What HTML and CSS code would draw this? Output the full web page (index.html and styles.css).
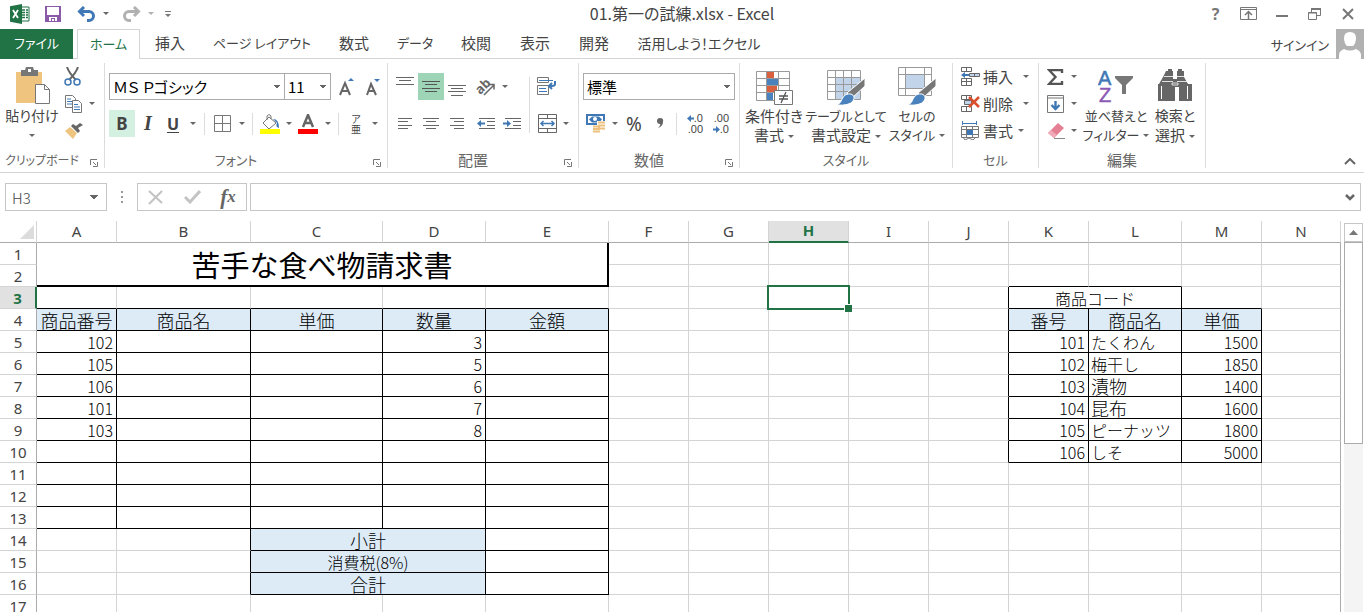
FILE: index.html
```html
<!DOCTYPE html>
<html lang="ja">
<head>
<meta charset="utf-8">
<title>01.第一の試練.xlsx - Excel</title>
<link rel="stylesheet" href="styles.css">
</head>
<body>
<header class="titlebar">
  <div class="quick">
    <svg class="logo" width="20" height="20" viewBox="0 0 20 20"><path d="M11 3h8v14h-8z" fill="#fff" stroke="#217346"/><path d="M12 6h3M16 6h2M12 8.500h3M16 8.500h2M12 11h3M16 11h2M12 13.500h3M16 13.500h2" stroke="#217346" stroke-width="1.300"/><path d="M0 2.200L12 0v20L0 17.800z" fill="#217346"/><path d="M3 6l5 8M8 6l-5 8" stroke="#fff" stroke-width="1.800"/></svg>
    <button class="icon w26" aria-label="上書き保存"><svg width="16" height="16"><path d="M0 0h16v16H0z" fill="#8a5aa8"/><path d="M2 1h12v8H2zM4 11h8v4H4z" fill="#fff"/><path d="M6 12h4v3H9v-2H7v2H6z" fill="#8a5aa8"/></svg></button>
    <button class="icon w26 undo" aria-label="元に戻す"><svg width="19" height="16" fill="none" stroke="#3f78b5" stroke-width="3"><path d="M7 1L2.500 5.500 7 10M3 5.500h9a4.500 4.500 0 0 1 0 9h-2"/></svg></button>
    <button class="icon arrow w14" aria-label="元に戻す履歴"></button>
    <button class="icon w26 redo" aria-label="やり直し"><svg width="19" height="16" fill="none" stroke="#b1b1b1" stroke-width="3"><path d="M12 1l4.500 4.500L12 10M16 5.500H7a4.500 4.500 0 0 0 0 9h2"/></svg></button>
    <button class="icon arrow w14 faint" aria-label="やり直し履歴"></button>
    <button class="icon w20" aria-label="クイック アクセスのカスタマイズ"><svg width="6" height="6"><path d="M0 .5h6" stroke="#777"/><path d="M0 3h6L3 6z" fill="#777"/></svg></button>
  </div>
  <h1 class="doc">01.第一の試練.xlsx - Excel</h1>
  <div class="window">
    <button class="icon w32 help" aria-label="ヘルプ">?</button>
    <button class="icon w32" aria-label="リボンの表示オプション"><svg width="17" height="13" fill="none" stroke="#777"><path d="M.5.5h16v12H.5zM.5 2.500h16"/><path d="M8.500 12V5M5 8l3.500-3.500L12 8" stroke-width="1.500"/></svg></button>
    <button class="icon w32" aria-label="最小化"><svg width="12" height="13"><path d="M0 8h12v2H0z" fill="#777"/></svg></button>
    <button class="icon w32" aria-label="元に戻す (縮小)"><svg width="13" height="12" fill="none" stroke="#777"><path d="M3.500 4V.5h9v7H9"/><path d="M3 1h10" stroke-width="2"/><path d="M.5 4.500h8v7h-8zM0 5h9"/></svg></button>
    <button class="icon w32" aria-label="閉じる"><svg width="12" height="12"><path d="M1 1l10 10M11 1L1 11" stroke="#777" stroke-width="2"/></svg></button>
  </div>
</header>

<nav class="tabs">
  <button class="tab file kana">ファイル</button>
  <button class="tab home kana">ホーム</button>
  <button class="tab">挿入</button>
  <button class="tab kana">ページ レイアウト</button>
  <button class="tab">数式</button>
  <button class="tab kana">データ</button>
  <button class="tab">校閲</button>
  <button class="tab">表示</button>
  <button class="tab">開発</button>
  <button class="tab blend">活用しよう！エクセル</button>
  <a class="signin kana" href="#">サインイン</a>
  <svg class="avatar" width="28" height="30"><path d="M0 0h28v30H0z" fill="#b1b1b1"/><path d="M8 9q0-6 6-6t6 6q0 5-3 8h-6q-3-3-3-8z" fill="#fff"/><path d="M3 30v-4q0-4 5-6 6 3 12 0 5 2 5 6v4z" fill="#fff"/></svg>
</nav>

<section class="ribbon">
  <div class="group clipboard">
    <div class="body">
      <button class="big w64"><svg class="art" width="36" height="39"><path d="M2 6h26v31H2z" fill="#eec47f"/><path d="M7 4h4l1-3h7l1 3h4v6H7z" fill="#777"/><path d="M14 3h3v3h-3z" fill="#fff"/><path d="M21.500 18.500h9l5 5v14h-14z" fill="#fff" stroke="#777"/><path d="M30.500 18.500v5h5" fill="none" stroke="#777"/></svg><span class="blend">貼り付け</span><i class="tri"></i></button>
      <div class="stack">
        <button class="icon row27 w16" aria-label="切り取り"><svg width="17" height="19" fill="none"><path d="M3 0q2 6 9 13M14 0q-2 6-9 13" stroke="#666" stroke-width="2"/><circle cx="4" cy="15" r="3" stroke="#3f78b5" stroke-width="1.500"/><circle cx="13" cy="15" r="3" stroke="#3f78b5" stroke-width="1.500"/></svg></button>
        <div class="line"><button class="icon row27 w20" aria-label="コピー"><svg width="18" height="18" fill="#fff" stroke="#777"><path d="M.5.500h7l3 3v9h-10z"/><path d="M2 4h4M2 6.500h5M2 9h5" stroke="#3f78b5"/><path d="M7.500 5.500h6l3 3v9h-9z"/><path d="M9 9.500h4M9 12h6M9 14.500h6" stroke="#3f78b5"/></svg></button><button class="icon arrow w16" aria-label="コピーのオプション"></button></div>
        <button class="icon row27 w20" aria-label="書式のコピー/貼り付け"><svg width="18" height="16"><path d="M0 8l5-4 7 6-4 6z" fill="#eec47f"/><path d="M6 3l7 7 2-2-2-3 5-3-3-2-4 3-3-2z" fill="#666"/></svg></button>
      </div>
    </div>
    <div class="label">クリップボード<button class="launch" aria-label="クリップボードの設定"><svg width="8" height="8"><path d="M.5 6V.5H7" fill="none" stroke="#777"/><path d="M3 3l3 3M7.500 3v4.500H3" fill="none" stroke="#777"/></svg></button></div>
  </div>

  <div class="group font">
    <div class="body rows">
      <div class="line"><select class="box fontname" aria-label="フォント"><option>ＭＳ Ｐゴシック</option></select><select class="box size" aria-label="フォント サイズ"><option>11</option></select>
        <button class="icon w26" aria-label="拡大"><svg width="16" height="18"><path d="M1 17L6 5l5 12M3 13h6" fill="none" stroke="#666" stroke-width="2"/><path d="M9 3h6l-3-3z" fill="#3f78b5"/></svg></button><button class="icon w26" aria-label="縮小"><svg width="16" height="18"><path d="M2 17L6 6l5 11M4 13h5" fill="none" stroke="#666" stroke-width="2"/><path d="M9 1h6l-3 3z" fill="#3f78b5"/></svg></button></div>
      <div class="line">
        <button class="icon w26 pressed bold">B</button><button class="icon w26 italic">I</button><button class="icon w24 under">U</button><button class="icon arrow w16" aria-label="下線の種類"></button><i class="sep"></i>
        <button class="icon w26" aria-label="罫線"><svg width="17" height="17"><path d="M.5.5h16v16H.5zM8.500 1v15M1 8.500h15" fill="none" stroke="#777"/></svg></button><button class="icon arrow w14" aria-label="罫線の種類"></button><i class="sep"></i>
        <button class="icon w26" aria-label="塗りつぶしの色"><svg width="20" height="20"><path d="M9 3l7 6-7 6-6-6z" fill="#fff" stroke="#777"/><path d="M7 6V2q2-3 4 0v3" fill="none" stroke="#777"/><path d="M13 5q6 0 6 9-4-1-2-5z" fill="#3f78b5"/><path d="M0 15h20v5H0z" fill="#ff0"/></svg></button><button class="icon arrow w12" aria-label="塗りつぶしの色の選択"></button>
        <button class="icon w26" aria-label="フォントの色"><svg width="20" height="20"><path d="M5 13L10 1l5 12M7 9h6" fill="none" stroke="#666" stroke-width="2.500"/><path d="M0 15h20v5H0z" fill="red"/></svg></button><button class="icon arrow w14" aria-label="フォントの色の選択"></button><i class="sep"></i>
        <button class="icon w26 ruby"><span>ア</span><span>亜</span></button><button class="icon arrow w12" aria-label="ふりがなの設定"></button>
      </div>
    </div>
    <div class="label kana">フォント<button class="launch" aria-label="フォントの設定"><svg width="8" height="8"><path d="M.5 6V.5H7" fill="none" stroke="#777"/><path d="M3 3l3 3M7.500 3v4.500H3" fill="none" stroke="#777"/></svg></button></div>
  </div>

  <div class="group align">
    <div class="body">
      <div class="rows split">
        <div class="line">
          <button class="icon w26" aria-label="上揃え"><svg width="18" height="20"><path d="M0 .5h18M3 3.500h12M0 7.500h18" stroke="#666"/></svg></button><button class="icon w26 chosen" aria-label="上下中央揃え"><svg width="18" height="20"><path d="M0 4.500h18M3 7.500h12M0 11.500h18M3 14.500h12" stroke="#555"/></svg></button><button class="icon w26" aria-label="下揃え"><svg width="18" height="20"><path d="M0 8.500h18M3 11.500h12M0 14.500h18M3 18.500h12" stroke="#666"/></svg></button>
          <button class="icon w26 apart" aria-label="方向"><svg class="slant" width="20" height="18"><text class="ab" x="0" y="13" transform="rotate(-45 7 10)">ab</text><path d="M8 17L18 7M13 6.500h5v5" fill="none" stroke="#666" stroke-width="1.500"/></svg></button><button class="icon arrow w12" aria-label="方向の選択"></button>
        </div>
        <div class="line">
          <button class="icon w26" aria-label="左揃え"><svg width="14" height="12"><path d="M0 .5h14M0 3.500h10M0 7.500h14M0 10.500h10" stroke="#666"/></svg></button><button class="icon w26" aria-label="中央揃え"><svg width="16" height="12"><path d="M0 .5h16M3 3.500h10M0 7.500h16M3 10.500h10" stroke="#666"/></svg></button><button class="icon w26" aria-label="右揃え"><svg width="14" height="12"><path d="M0 .5h14M4 3.500h10M0 7.500h14M4 10.500h10" stroke="#666"/></svg></button>
          <button class="icon w26 apart" aria-label="インデントを減らす"><svg width="18" height="12"><path d="M2 .5h16M10 3.500h8M10 7.500h8M2 10.500h16" stroke="#666"/><path d="M0 5.500L4 2v2.500h4v2H4V9z" fill="#3f78b5"/></svg></button><button class="icon w26" aria-label="インデントを増やす"><svg width="18" height="12"><path d="M2 .5h16M10 3.500h8M10 7.500h8M2 10.500h16" stroke="#666"/><path d="M8 5.500L4 2v2.500H0v2h4V9z" fill="#3f78b5"/></svg></button>
        </div>
      </div>
      <div class="rows wrapcol">
        <div class="line"><button class="icon w26" aria-label="折り返して全体を表示する"><svg width="20" height="19" fill="none"><path d="M.5.5h11v5H.5zM.5 8.500h11v9H.5z" stroke="#777"/><path d="M2 3.500h14M2 11.500h7M2 14.500h8" stroke="#3f78b5"/><path d="M18 4v3q0 2-3 2h-3M15 6l-3 3 3 3" stroke="#3f78b5" stroke-width="2"/></svg></button></div>
        <div class="line"><button class="icon w26" aria-label="セルを結合して中央揃え"><svg width="19" height="19" fill="none"><path d="M.5.5h18v18H.5zM.5 4.500h18M.5 14.500h18M9.500 0v4M9.500 15v4" stroke="#666"/><path d="M3 9.500h13M5.500 7L3 9.500 5.500 12M13.500 7L16 9.500 13.500 12" stroke="#3f78b5" stroke-width="1.500"/></svg></button><button class="icon arrow w12" aria-label="結合の選択"></button></div>
      </div>
    </div>
    <div class="label">配置<button class="launch" aria-label="配置の設定"><svg width="8" height="8"><path d="M.5 6V.5H7" fill="none" stroke="#777"/><path d="M3 3l3 3M7.500 3v4.500H3" fill="none" stroke="#777"/></svg></button></div>
  </div>

  <div class="group number">
    <div class="body rows">
      <div class="line"><select class="box format" aria-label="数値の書式"><option>標準</option></select></div>
      <div class="line">
        <button class="icon w26" aria-label="通貨表示形式"><svg width="20" height="19"><path d="M0 0h19v11H0z" fill="#3f78b5"/><path d="M2 2h15v7H2z" fill="#fff"/><path d="M3 5.500l3-3h7l3 3-3 3H6z" fill="#3f78b5"/><circle cx="9" cy="5" r="2" fill="#fff"/><path d="M11 7h8v10h-3v2H6v-8h5z" fill="#fff"/><path d="M12 8.500h7M12 11.500h7M12 14.500h7M7 12.500h7M7 15h7M7 17.500h7" stroke="#eec07d" stroke-width="2"/></svg></button><button class="icon arrow w12" aria-label="通貨の選択"></button>
        <button class="icon w26 sign">%</button><button class="icon w26" aria-label="桁区切りスタイル"><svg width="7" height="11"><path d="M3 0q4 0 3 4 0 4-5 6 3-3 2-4-3 0-3-3 0-3 3-3z" fill="#666"/></svg></button><i class="sep"></i>
        <button class="icon w26 dec" aria-label="小数点以下の表示桁数を増やす"><span><svg width="7" height="7"><path d="M0 3.500L4 0v2.500h3v2H4V7z" fill="#3f78b5"/></svg>.0</span><span>.00</span></button><button class="icon w26 dec" aria-label="小数点以下の表示桁数を減らす"><span>.00</span><span><svg width="7" height="7"><path d="M7 3.500L3 0v2.500H0v2h3V7z" fill="#3f78b5"/></svg>.0</span></button>
      </div>
    </div>
    <div class="label">数値<button class="launch" aria-label="数値の設定"><svg width="8" height="8"><path d="M.5 6V.5H7" fill="none" stroke="#777"/><path d="M3 3l3 3M7.500 3v4.500H3" fill="none" stroke="#777"/></svg></button></div>
  </div>

  <div class="group styles">
    <div class="body">
      <button class="big w64"><svg class="art" width="37" height="39"><path d="M.5 5.500h33v29H.5z" fill="#fff" stroke="#999"/><path d="M11 6h7v7h-7zM11 20h10v7H11z" fill="#d9603f"/><path d="M11 13h11v7H11zM11 27h6v7h-6z" fill="#4a82bd"/><path d="M10.500 6v28M22.500 6v28M0 12.500h34M0 19.500h34M0 26.500h34" stroke="#999" fill="none"/><path d="M18.500 24.500h18v14h-18z" fill="#fff" stroke="#777"/><path d="M23 30h9M23 33h9M30 26l-5 11" stroke="#555" stroke-width="1.300"/></svg><span>条件付き</span><span>書式<i class="tri"></i></span></button>
      <button class="big w80"><svg class="art" width="38" height="39"><path d="M.5 4.500h33v29H.5z" fill="#fff"/><path d="M9 11h25v22H9z" fill="#c1d4e9"/><path d="M.5 4.500h33v29H.5zM8.500 4v29M16.500 4v29M24.500 4v29M0 11.500h34M0 18.500h34M0 25.500h34" fill="none" stroke="#999"/><path d="M38 12v8L25 32l-5-5z" fill="#777" stroke="#fff"/><path d="M24 28q5 2 2 7-4 5-16 4 4-2 5-6 3-6 9-5z" fill="#4a82bd" stroke="#fff"/></svg><span class="kana">テーブルとして</span><span>書式設定<i class="tri"></i></span></button>
      <button class="big w62"><svg class="art" width="38" height="39"><path d="M.5 1.500h33v28H.5z" fill="#fff" stroke="#999"/><path d="M8 9h18v13H8z" fill="#c1d4e9"/><path d="M7.500 1v28M26.500 1v28M0 8.500h34M0 22.500h34" fill="none" stroke="#999"/><path d="M38 12v8L25 32l-5-5z" fill="#777" stroke="#fff"/><path d="M24 28q5 2 2 7-4 5-16 4 4-2 5-6 3-6 9-5z" fill="#4a82bd" stroke="#fff"/></svg><span class="kana">セルの</span><span class="kana">スタイル<i class="tri"></i></span></button>
    </div>
    <div class="label kana">スタイル</div>
  </div>

  <div class="group cells">
    <div class="body stack">
      <button class="small wide"><svg width="19" height="19" fill="none"><path d="M.5.500h10v4H.5zM5.500 0v4M.5 11.500h10v7H.5zM5.500 11v7M0 14.500h10" stroke="#666"/><path d="M8.500 6.500h10v3h-10zM13.500 6v3" fill="#c1d4e9" stroke="#666"/><path d="M0 8l4-3v2h4v2H4v2z" fill="#3f78b5"/></svg><span>挿入</span><i class="tri"></i></button>
      <button class="small wide"><svg width="19" height="19" fill="none"><path d="M.5 1.500h10v4H.5zM5.500 1v4M.5 12.500h10v5H.5zM5.500 12v5" stroke="#666"/><path d="M3.500 6.500h7v4h-7z" fill="#c1d4e9" stroke="#666"/><path d="M8 3l10 10M18 3L8 13" stroke="#d9502e" stroke-width="2.500"/></svg><span>削除</span><i class="tri"></i></button>
      <button class="small"><svg width="19" height="19" fill="none"><path d="M1.500 0v4M15.500 0v4M2 2.500h13" stroke="#3f78b5"/><path d="M.5 5.500h17v11H.5zM5.500 5v12M11.500 5v12M0 8.500h18M0 13.500h18M2 16l2 3 4-2 4 2 3-3" stroke="#777"/><path d="M6 9h6v5H6z" fill="#3f78b5"/></svg><span>書式</span><i class="tri"></i></button>
    </div>
    <div class="label kana">セル</div>
  </div>

  <div class="group editing">
    <div class="body">
      <div class="stack tools">
        <button class="small" aria-label="合計"><svg width="18" height="16"><path d="M15 4V1H2l6.500 7L2 15h13v-3" fill="none" stroke="#555" stroke-width="2.400"/></svg><i class="tri"></i></button>
        <button class="small" aria-label="フィル"><svg width="18" height="18" fill="none"><path d="M.5.5h16v17H.5zM0 3h17" stroke="#777"/><path d="M8.500 6v8M4.500 10l4 4 4-4" stroke="#3f78b5" stroke-width="2.400"/></svg><i class="tri"></i></button>
        <button class="small" aria-label="クリア"><svg width="18" height="18"><path d="M1 11L11 1l6 5L7 16z" fill="#e57f93"/><path d="M4 8l6 5-3 3-6-5z" fill="#f0a9b6"/><path d="M7 16.500h11" stroke="#888"/></svg><i class="tri"></i></button>
      </div>
      <button class="big w62"><svg class="art" width="36" height="39"><text class="az blue" x="0" y="19">A</text><text class="az violet" x="1" y="36">Z</text><path d="M17 10h18v2l-7 7v9h-4v-9l-7-7z" fill="#777"/></svg><span class="kana">並べ替えと</span><span class="kana">フィルター<i class="tri"></i></span></button>
      <button class="big w56"><svg class="art" width="36" height="39" fill="#666"><path d="M9 5h2V3h4v2h1v8h4V5h1V3h4v2h2v6l4 7 4 0v17h-13V21h-4v14H1V18h1l4-7z"/><path d="M7 10.500h9M20 10.500h9M5 15.500h11M20 15.500h11M15 17h6v2h-6z" stroke="#fff" stroke-width=".8"/><path d="M4.500 20v13M30.500 20v13" stroke="#fff"/></svg><span class="blend">検索と</span><span>選択<i class="tri"></i></span></button>
    </div>
    <div class="label">編集</div>
  </div>
  <button class="icon collapse" aria-label="リボンを折りたたむ"><svg width="12" height="7"><path d="M1 6l5-5 5 5" fill="none" stroke="#666" stroke-width="2"/></svg></button>
</section>

<section class="formula">
  <select class="namebox" aria-label="名前ボックス"><option>H3</option></select>
  <svg class="dots" width="2" height="12"><path d="M0 0h2v2H0zM0 5h2v2H0zM0 10h2v2H0z" fill="#999"/></svg>
  <div class="fx">
    <button class="icon w32" aria-label="キャンセル"><svg width="16" height="15"><path d="M1 1l13 12M14 1L1 14" stroke="#c4c4c4" stroke-width="2.200"/></svg></button>
    <button class="icon w32" aria-label="入力"><svg width="17" height="14"><path d="M1 7l5 5L16 1" fill="none" stroke="#c4c4c4" stroke-width="3"/></svg></button>
    <button class="icon w32 fn"><i>f</i>x</button>
  </div>
  <div class="entry"><input aria-label="数式バー"><button class="icon w20" aria-label="数式バーの展開"><svg width="10" height="7"><path d="M1 1l4 4 4-4" fill="none" stroke="#666" stroke-width="2.500"/></svg></button></div>
</section>

<main class="sheet">
<table class="grid">
<colgroup><col class="c37"><col class="c80"><col class="c134"><col class="c132"><col class="c103"><col class="c123"><col class="c80"><col class="c80"><col class="c80"><col class="c80"><col class="c80"><col class="c80"><col class="c93"><col class="c80"><col></colgroup>
<thead><tr><th class="corner"><svg width="14" height="14"><path d="M14 0v14H0z" fill="#dcdcdc"/></svg></th><th>A</th><th>B</th><th>C</th><th>D</th><th>E</th><th>F</th><th>G</th><th class="active">H</th><th>I</th><th>J</th><th>K</th><th>L</th><th>M</th><th>N</th></tr></thead>
<tbody>
<tr><th>1</th><td class="title" colspan="5" rowspan="2">苦手な食べ物請求書</td><td></td><td></td><td></td><td></td><td></td><td></td><td></td><td></td><td></td></tr>
<tr><th>2</th><td></td><td></td><td></td><td></td><td></td><td class="b"></td><td class="b"></td><td></td><td></td></tr>
<tr><th class="active">3</th><td class="b"></td><td class="b"></td><td class="b"></td><td class="b"></td><td class="b"></td><td></td><td></td><td class="current"><span class="cursor"></span></td><td></td><td class="r"></td><td class="r b mid" colspan="2">商品コード</td><td class="b"></td><td></td></tr>
<tr><th>4</th><td class="r b head">商品番号</td><td class="r b head">商品名</td><td class="r b head">単価</td><td class="r b head">数量</td><td class="r b head">金額</td><td></td><td></td><td></td><td></td><td class="r"></td><td class="r b head">番号</td><td class="r b head">商品名</td><td class="r b head">単価</td><td></td></tr>
<tr><th>5</th><td class="r b num">102</td><td class="r b"></td><td class="r b"></td><td class="r b num">3</td><td class="r b"></td><td></td><td></td><td></td><td></td><td class="r"></td><td class="r b num">101</td><td class="r b">たくわん</td><td class="r b num">1500</td><td></td></tr>
<tr><th>6</th><td class="r b num">105</td><td class="r b"></td><td class="r b"></td><td class="r b num">5</td><td class="r b"></td><td></td><td></td><td></td><td></td><td class="r"></td><td class="r b num">102</td><td class="r b">梅干し</td><td class="r b num">1850</td><td></td></tr>
<tr><th>7</th><td class="r b num">106</td><td class="r b"></td><td class="r b"></td><td class="r b num">6</td><td class="r b"></td><td></td><td></td><td></td><td></td><td class="r"></td><td class="r b num">103</td><td class="r b kanji">漬物</td><td class="r b num">1400</td><td></td></tr>
<tr><th>8</th><td class="r b num">101</td><td class="r b"></td><td class="r b"></td><td class="r b num">7</td><td class="r b"></td><td></td><td></td><td></td><td></td><td class="r"></td><td class="r b num">104</td><td class="r b kanji">昆布</td><td class="r b num">1600</td><td></td></tr>
<tr><th>9</th><td class="r b num">103</td><td class="r b"></td><td class="r b"></td><td class="r b num">8</td><td class="r b"></td><td></td><td></td><td></td><td></td><td class="r"></td><td class="r b num">105</td><td class="r b">ピーナッツ</td><td class="r b num">1800</td><td></td></tr>
<tr><th>10</th><td class="r b"></td><td class="r b"></td><td class="r b"></td><td class="r b"></td><td class="r b"></td><td></td><td></td><td></td><td></td><td class="r"></td><td class="r b num">106</td><td class="r b">しそ</td><td class="r b num">5000</td><td></td></tr>
<tr><th>11</th><td class="r b"></td><td class="r b"></td><td class="r b"></td><td class="r b"></td><td class="r b"></td><td></td><td></td><td></td><td></td><td></td><td></td><td></td><td></td><td></td></tr>
<tr><th>12</th><td class="r b"></td><td class="r b"></td><td class="r b"></td><td class="r b"></td><td class="r b"></td><td></td><td></td><td></td><td></td><td></td><td></td><td></td><td></td><td></td></tr>
<tr><th>13</th><td class="r b"></td><td class="r b"></td><td class="r b"></td><td class="r b"></td><td class="r b"></td><td></td><td></td><td></td><td></td><td></td><td></td><td></td><td></td><td></td></tr>
<tr><th>14</th><td></td><td class="r"></td><td class="r b head" colspan="2">小計</td><td class="r b"></td><td></td><td></td><td></td><td></td><td></td><td></td><td></td><td></td><td></td></tr>
<tr><th>15</th><td></td><td class="r"></td><td class="r b head mixed" colspan="2">消費税(8%)</td><td class="r b"></td><td></td><td></td><td></td><td></td><td></td><td></td><td></td><td></td><td></td></tr>
<tr><th>16</th><td></td><td class="r"></td><td class="r b head" colspan="2">合計</td><td class="r b"></td><td></td><td></td><td></td><td></td><td></td><td></td><td></td><td></td><td></td></tr>
<tr><th>17</th><td></td><td></td><td></td><td></td><td></td><td></td><td></td><td></td><td></td><td></td><td></td><td></td><td></td><td></td></tr>
</tbody>
</table>
<div class="scroll">
  <button class="icon up" aria-label="上へスクロール"><svg width="9" height="5"><path d="M0 5h9L4.500 0z" fill="#777"/></svg></button>
  <div class="thumb"></div>
</div>
</main>
</body>
</html>
```
FILE: styles.css
```css
* { box-sizing: border-box; }
body {
  margin: 0;
  height: 100vh;
  display: flex;
  flex-direction: column;
  overflow: hidden;
  background: #fff;
  color: #444;
  font-family: "Noto Sans CJK JP", sans-serif;
  font-size: 15px;
  font-feature-settings: "palt";
}
button, select, input { font: inherit; font-feature-settings: inherit; color: inherit; border: 0; background: none; padding: 0; margin: 0; }
button { white-space: nowrap; }
svg { display: block; flex: none; }
.kana { font-size: 13px; }
.blend { font-size: 14px; }

.icon { display: flex; align-items: center; justify-content: center; height: 27px; flex: none; }
.w12 { width: 12px; }
.w14 { width: 14px; }
.w16 { width: 16px; }
.w20 { width: 20px; }
.w24 { width: 24px; }
.w26 { width: 26px; }
.w32 { width: 33px; }
.arrow::before, .tri {
  content: "";
  display: inline-block;
  border: 3px solid transparent;
  border-top-color: #666;
  border-bottom: 0;
}
.faint::before { border-top-color: #b1b1b1; }

/* Title bar */
.titlebar { display: grid; grid-template-columns: 1fr auto 1fr; align-items: center; height: 29px; flex: none; padding-bottom: 2px; }
.quick { display: flex; align-items: center; padding-left: 10px; height: 26px; }
.logo { margin-right: 10px; }
.undo { margin-left: 7px; }
.redo { margin-left: 5px; }
.doc { margin: 0; font-size: 16px; font-weight: 400; line-height: 27px; }
.window { display: flex; justify-content: flex-end; height: 27px; }
.help { font-family: "Noto Sans", sans-serif; font-size: 16px; font-weight: 700; color: #777; }

/* Ribbon tabs */
.tabs {
  display: grid;
  grid-template-columns: 77px 63px 60px 124px 60px 62px 60px 58px 60px 150px 1fr 28px;
  height: 30px;
  flex: none;
  box-shadow: inset 0 -1px #d4d4d4;
}
.tab { padding-bottom: 3px; }
.file { margin-right: 4px; background: #217346; color: #fff; }
.home { border: 1px solid #d4d4d4; border-bottom: 0; background: #fff; color: #217346; }
.signin { justify-self: end; align-self: center; margin-right: 7px; color: #444; text-decoration: none; }

/* Ribbon */
.ribbon { display: flex; padding: 4px 0; height: 114px; flex: none; border-bottom: 1px solid #d4d4d4; }
.group { display: flex; flex-direction: column; border-right: 1px solid #dcdcdc; flex: none; }
.body { display: flex; flex: 1; }
.label { position: relative; height: 18px; line-height: 20px; text-align: center; color: #666; }
.launch { position: absolute; right: 6px; bottom: 1px; }
.clipboard { width: 105px; }
.clipboard .label { padding-right: 20px; font-size: 12px; }
.font { width: 283px; }
.align { width: 191px; }
.number { width: 161px; }
.styles { width: 213px; }
.cells { width: 86px; }
.editing { width: 167px; }
.font .label, .align .label, .number .label { padding-right: 20px; }

.rows { display: flex; flex-direction: column; gap: 10px; padding: 10px 4px 0; }
.line { display: flex; align-items: center; height: 27px; }
.stack { display: flex; flex-direction: column; }
.row27 { height: 27px; }
.box, .namebox {
  appearance: none;
  background-image: conic-gradient(from 0deg at 50% 100%, #666 45deg, transparent 0 315deg, #666 0);
  background-repeat: no-repeat;
  background-position: right 4px center;
  background-size: 6px 3px;
}
.box { flex: none; height: 27px; border: 1px solid #ababab; padding-left: 3px; color: #000; }
.fontname { width: 176px; }
.size { width: 47px; margin-left: -1px; margin-right: 3px; }
.format { width: 152px; }
.box, .namebox { transform: none; }
.pressed { background: #d3f0e0; }
.chosen { background: #9fd5b7; }
.bold { font: 700 17px "Noto Sans", sans-serif; }
.italic { font: italic 700 20px "Liberation Serif", serif; }
.under { font: 700 16px "Noto Sans", sans-serif; text-decoration: underline; text-underline-offset: 2px; }
.sep { width: 1px; height: 22px; background: #dcdcdc; margin: 0 4px 0 3px; flex: none; }
.ruby { flex-direction: column; font-size: 10px; line-height: 10px; }
.apart { margin-left: 3px; }
.split { padding-right: 0; width: 142px; position: relative; }
.split::after { content: ""; position: absolute; right: 0; top: 14px; width: 1px; height: 56px; background: #dcdcdc; }
.slant { overflow: visible; }
.ab { font: 700 13px "Noto Sans", sans-serif; fill: #666; }
.sign { font: 19px "Noto Sans", sans-serif; }
.dec { flex-direction: column; align-items: flex-end; padding-right: 4px; font: 11px/11px "Liberation Sans", sans-serif; }
.dec span { display: flex; align-items: center; }

.big { display: flex; flex-direction: column; align-items: center; height: 86px; line-height: 19px; }
.big span { height: 19px; }
.big .art { margin: 3px 0 1px; }
.big .tri { margin-left: 4px; margin-bottom: 3px; }
.clipboard .big .tri { margin: 9px 0 0; }
.w56 { width: 56px; }
.w62 { width: 62px; }
.w64 { width: 64px; }
.w80 { width: 80px; }
.styles .body { padding-left: 2px; }
.cells .body { padding-left: 8px; }
.small { display: flex; align-items: center; height: 27px; gap: 3px; }
.small .tri { margin-left: 2px; }
.wide .tri { margin-left: 7px; }
.tools { width: 46px; padding-left: 8px; }
.tools .small { gap: 6px; }
.tools .small .tri { margin: 0; }
.az { font: 20px "Liberation Sans", sans-serif; }
.blue { fill: #3f78b5; stroke: #3f78b5; stroke-width: .5px; }
.violet { fill: #8a5ab5; stroke: #8a5ab5; stroke-width: .5px; }
.collapse { margin: auto 8px 0 auto; height: 14px; }

/* Formula bar */
.formula { display: flex; align-items: center; height: 48px; padding: 0 3px 0 5px; flex: none; }
.namebox, .fx, .entry { height: 28px; border: 1px solid #c6c6c6; }
.namebox { width: 102px; padding-left: 6px; background-position: right 8px center; background-size: 8px 4px; font-weight: 300; }
.dots { margin: 0 14px; }
.fx { display: flex; align-items: center; justify-content: space-around; width: 110px; }
.fn { font: italic 700 17px "Liberation Serif", serif; color: #666; }
.fn i { font-size: 21px; }
.entry { flex: 1; display: flex; align-items: center; margin-left: 3px; }
.entry input { flex: 1; min-width: 0; }

/* Worksheet */
.sheet { display: flex; flex: 1; min-height: 0; align-items: flex-start; overflow: hidden; }
.grid { flex: 1; width: 100%; table-layout: fixed; border-collapse: separate; border-spacing: 0; color: #000; font-size: 16px; font-weight: 300; line-height: 18px; font-feature-settings: normal; }
.c37 { width: 37px; }
.c80 { width: 80px; }
.c93 { width: 93px; }
.c103 { width: 103px; }
.c123 { width: 123px; }
.c132 { width: 132px; }
.c134 { width: 134px; }
.grid td, .grid th { height: 22px; padding: 0 2px; border-right: 1px solid #d4d4d4; border-bottom: 1px solid #d4d4d4; white-space: nowrap; }
.grid th { font: 15px/18px "Noto Sans", sans-serif; color: #444; }
.grid thead th { border-bottom-color: #ababab; padding-bottom: 2px; }
.grid tbody th { border-right-color: #ababab; }
.grid td:last-child { border-right-color: #ababab; }
.grid .corner { border-right-color: #d4d4d4; padding-bottom: 0; }
.corner svg { margin-left: auto; }
.grid .active { background: #e1e1e1; color: #217346; font-weight: 700; }
.grid thead .active { border-bottom: 2px solid #217346; }
.grid tbody .active { border-right: 2px solid #217346; }
.grid .r { border-right-color: #000; }
.grid .b { border-bottom-color: #000; }
.grid .head { background: #ddebf7; text-align: center; font-size: 18px; }
.grid .mixed { font-size: 16px; }
.grid .mid { text-align: center; }
.grid .kanji { font-size: 18px; }
.grid .num { text-align: right; padding-right: 3px; }
.grid .title { border-right: 2px solid #000; border-bottom: 2px solid #000; text-align: center; font-size: 29px; font-weight: 400; line-height: 40px; }
.grid .current { position: relative; }
.cursor { position: absolute; inset: -2px; border: 2px solid #217346; }
.cursor::after { content: ""; position: absolute; right: -4px; bottom: -4px; width: 7px; height: 7px; background: #217346; border: solid #fff; border-width: 1px 0 0 1px; }
.scroll { width: 19px; margin: 2px 1px 0 3px; height: 100%; background: #f4f4f4; flex: none; }
.up { width: 19px; height: 19px; border: 1px solid #c6c6c6; background: #fff; }
.thumb { width: 19px; height: 202px; border: 1px solid #ababab; background: #fff; }
```
